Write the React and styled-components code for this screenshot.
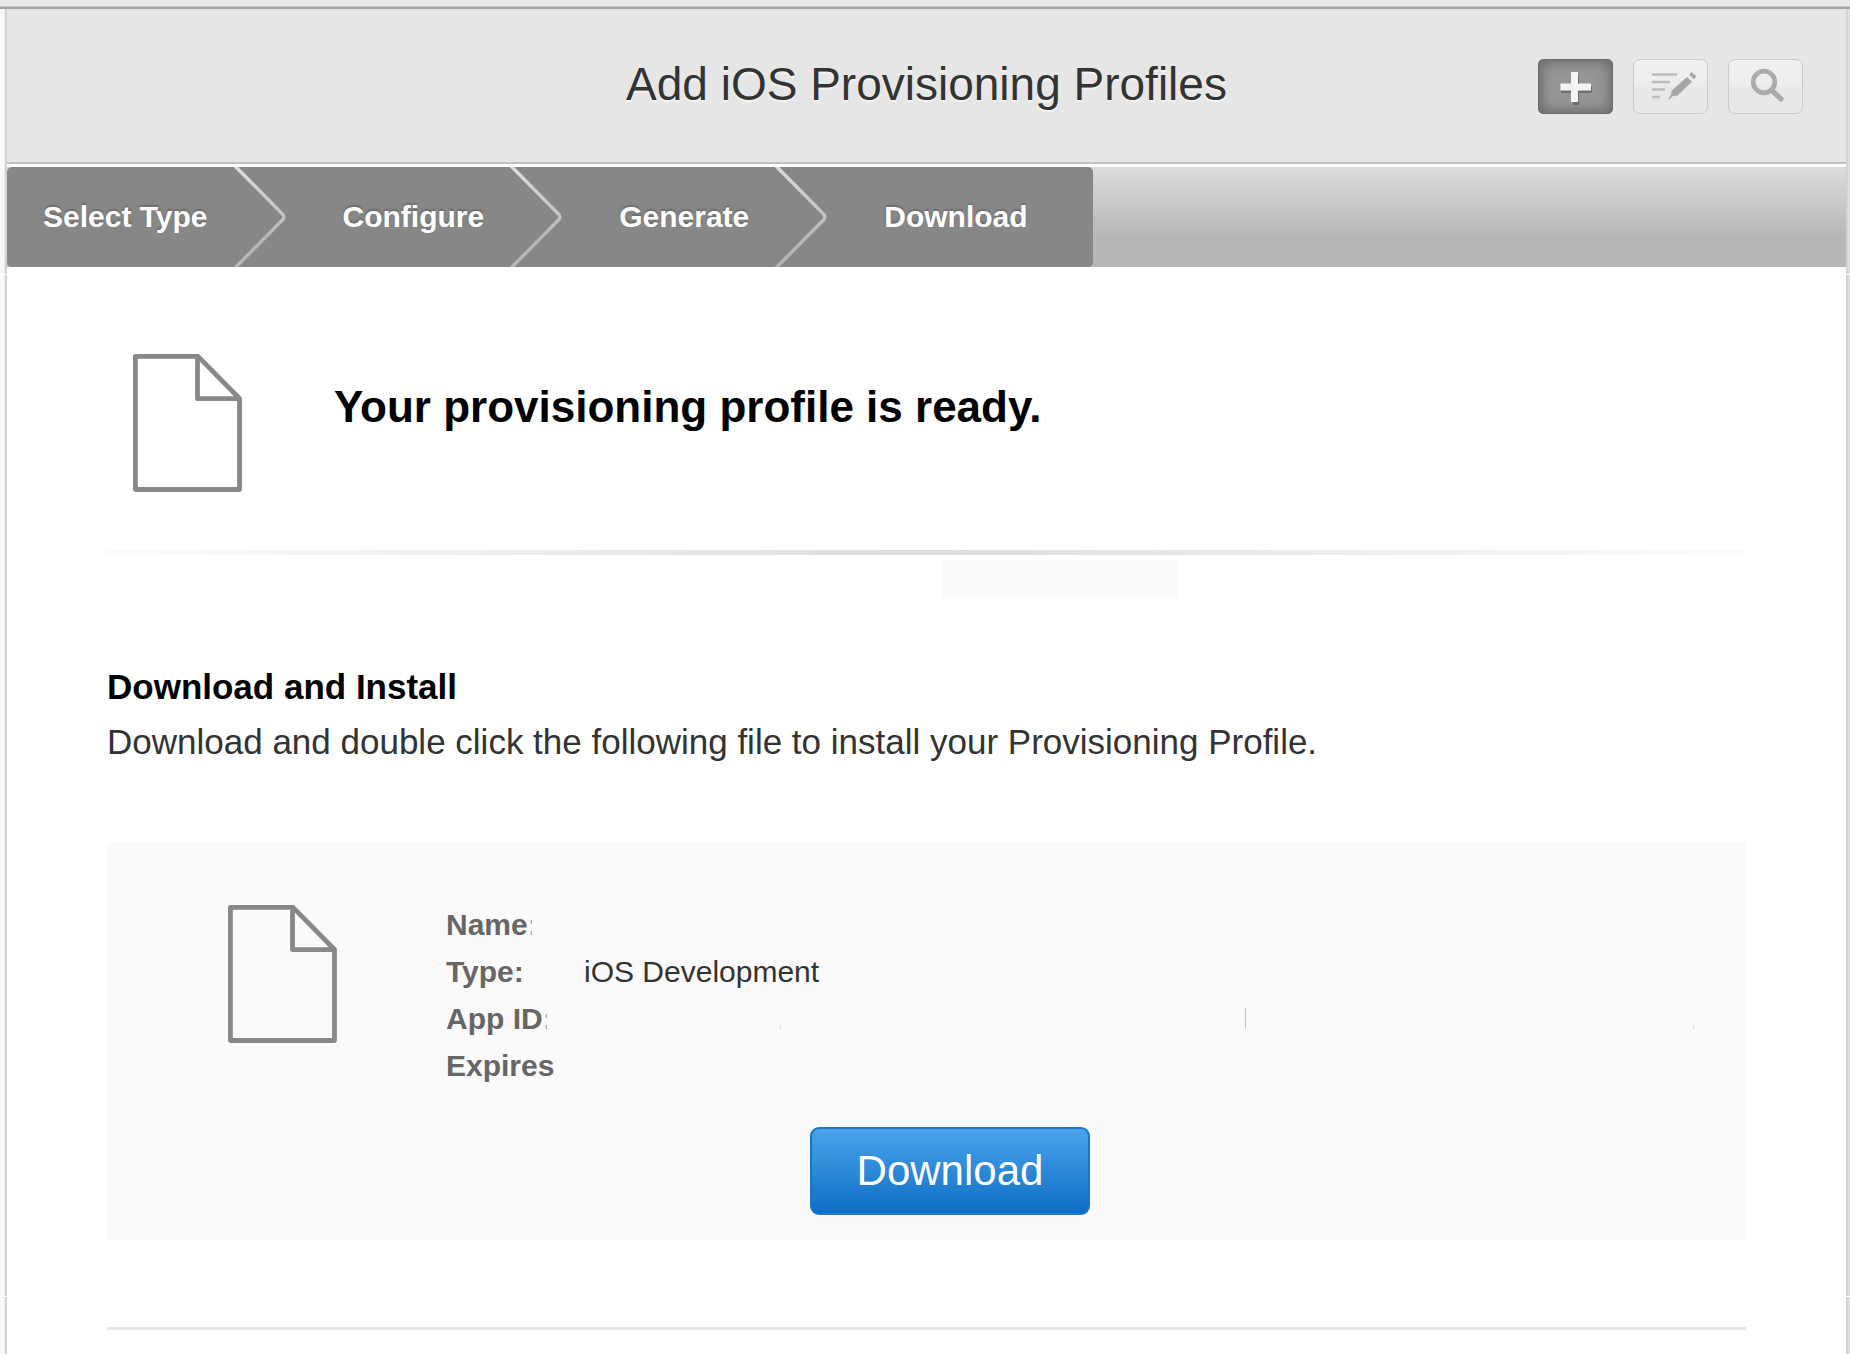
import React from "react";
import styled, { createGlobalStyle, css } from "styled-components";

const GlobalStyle = createGlobalStyle`
  *, *::before, *::after { box-sizing: border-box; }
  body {
    margin: 0;
    background: #ffffff;
    color: #333333;
    font-family: "Liberation Sans", Arial, Helvetica, sans-serif;
  }
  h1, h2, h3, p, ol, dl, dd, dt { margin: 0; padding: 0; }
`;

const Page = styled.div`
  min-height: 100vh;
  display: flex;
  flex-direction: column;
`;

const TopStrip = styled.div`
  height: 9px;
  background: #e8e8e8;
  border-bottom: 2px solid #a5a5a5;
  box-shadow: inset 0 -1px 0 #c6c6c6;
`;

const Shell = styled.div`
  flex: 1;
  display: grid;
  grid-template-columns: 7px minmax(0, 1fr) 4px;
`;

const seams = "linear-gradient(transparent 265px, #fff 265px, #fff 266px, transparent 266px, transparent 1287px, #fff 1287px, #fff 1288px, transparent 1288px)";

const LeftRail = styled.div`
  background: ${seams}, linear-gradient(90deg, #f9f9f9 4px, #ececec 4px, #ececec 5px, #d3d3d3 5px);
`;

const RightRail = styled.div`
  background: ${seams}, linear-gradient(90deg, #cccccc, #e6e6e6);
`;

const Header = styled.header`
  display: grid;
  grid-template-columns: 1fr auto 1fr;
  align-items: start;
  padding: 50px 43px 48px;
  background: #e6e6e6;
  border-bottom: 2px solid #c0c0c0;
`;

const Title = styled.h1`
  grid-column: 2;
  font-size: 46px;
  line-height: 50px;
  height: 55px;
  font-weight: 400;
  color: #333333;
  text-shadow: 0 2px 1px #f4f4f4;
`;

const Tools = styled.div`
  justify-self: end;
  display: flex;
  gap: 20px;
`;

const ToolButton = styled.button`
  width: 75px;
  height: 55px;
  padding: 0;
  border: 1px solid #cacaca;
  border-radius: 7px;
  background: linear-gradient(#f0f0f0, #ececec 50%, #e8e8e8 50%, #e9e9e9);
  cursor: pointer;

  svg { display: block; width: 73px; height: 53px; }

  ${(p) => p.$active && css`
    border-color: #6b6b6b;
    border-radius: 5px;
    background: #969696;
    box-shadow: inset 0 0 13px 2px #666666;
  `}
`;

const StepBar = styled.nav`
  margin-top: 3px;
  height: 100px;
  background: linear-gradient(#dcdcdc, #b7b7b7 70%, #b7b7b7);
`;

const Steps = styled.ol`
  display: flex;
  width: max-content;
  height: 100%;
  padding: 0 65px 0 36px;
  list-style: none;
  background: #878787;
  border-radius: 5px;
`;

const Step = styled.li`
  display: flex;
  align-items: center;
`;

const StepLabel = styled.a`
  font-size: 30px;
  line-height: 40px;
  font-weight: 700;
  color: #ffffff;
  text-decoration: none;
  text-shadow: 0 -2px 2px #6c6c6c;
`;

const Chevron = styled.svg`
  width: 52px;
  height: 100px;
  margin: 0 57px 0 26px;
`;

const Content = styled.main`
  padding: 87px 100px 24px;
`;

const Intro = styled.section`
  display: flex;
  align-items: flex-start;
  gap: 92px;
  padding: 0 26px 58px;
`;

const Ready = styled.h2`
  padding-top: 27px;
  font-size: 44px;
  line-height: 52px;
  font-weight: 700;
  color: #000000;
`;

const FadeRule = styled.div`
  height: 5px;
  background: linear-gradient(90deg, #fbfbfb, #f1f1f1 20%, #dcdcdc 50%, #f1f1f1 80%, #fbfbfb);
`;

const Patch = styled.div`
  width: 235px;
  height: 39px;
  margin: 5px 0 60px 51%;
  background: #fafafa;
`;

const SectionTitle = styled.h3`
  font-size: 35px;
  line-height: 55px;
  font-weight: 700;
  color: #000000;
`;

const Lead = styled.p`
  font-size: 35px;
  line-height: 55px;
`;

const Card = styled.section`
  margin-top: 73px;
  padding: 59px 48px 25px 121px;
  background: #fafafa;
`;

const CardBody = styled.div`
  display: flex;
  align-items: flex-start;
  gap: 109px;
`;

const FileIcon = styled.svg`
  flex: none;
  width: 109px;
  height: 138px;
  margin-top: ${(p) => (p.$inset ? 4 : 0)}px;
`;

const Details = styled.dl`
  flex: 1;
`;

const Detail = styled.div`
  display: grid;
  grid-template-columns: 138px 1fr;
  font-size: 30px;
  line-height: 47px;
`;

const Term = styled.dt`
  white-space: nowrap;
  font-weight: 700;
  color: #666666;
`;

/* Only the leading edge of the colon is painted. */
const FadedColon = styled.span`
  color: transparent;
  background: linear-gradient(90deg, #b0b0b0 4px, transparent 4px);
  background-clip: text;
  -webkit-background-clip: text;
`;

const Value = styled.dd`
  min-height: 47px;
`;

const MaskedValue = styled.dd`
  display: grid;
  grid-template-columns: 197px 465px 448px;
  align-items: end;
  padding-bottom: 13px;
`;

const Sliver = styled.span`
  width: 1px;
  height: ${(p) => p.$h}px;
  background: ${(p) => (p.$h > 10 ? "#c4c4c4" : "#dcdcdc")};
  justify-self: end;
`;

const Actions = styled.div`
  display: flex;
  justify-content: center;
  margin: 38px 0 0 -26px;
`;

const DownloadButton = styled.button`
  width: 280px;
  height: 88px;
  padding: 0;
  border: 2px solid #1b76c9;
  border-radius: 9px;
  background: linear-gradient(#4ba3eb, #0e6ec6);
  font-family: inherit;
  font-size: 42px;
  line-height: 48px;
  color: #ffffff;
  cursor: pointer;
`;

const BottomRule = styled.hr`
  height: 3px;
  margin: 87px 0 0;
  border: 0;
  background: #e6e6e6;
`;

function Document({ inset }) {
  return (
    <FileIcon $inset={inset} viewBox="0 0 109 138" fill="none" stroke="#888888" strokeWidth="4.8" strokeLinejoin="round" aria-hidden="true">
      <path d="M2.4 2.4H65L106.500 44.500V135.500H2.400Z" />
      <path d="M64.500 3V44.700H106" />
    </FileIcon>
  );
}

function StepChevron() {
  return (
    <Chevron viewBox="0 0 52 100" fill="none" aria-hidden="true">
      <defs>
        <linearGradient id="chevron" x1="0" y1="0" x2="0" y2="100" gradientUnits="userSpaceOnUse">
          <stop offset="0" stopColor="#dcdcdc" />
          <stop offset="0.7" stopColor="#b7b7b7" />
          <stop offset="1" stopColor="#b7b7b7" />
        </linearGradient>
      </defs>
      <path d="M0 -2L49 47.500Q50.500 50 49 52.500L0 102" stroke="url(#chevron)" strokeWidth="3.4" />
    </Chevron>
  );
}

const steps = ["Select Type", "Configure", "Generate", "Download"];

export default function App() {
  return (
    <Page>
      <GlobalStyle />
      <TopStrip />
      <Shell>
        <LeftRail />
        <div>
          <Header>
            <Title>Add iOS Provisioning Profiles</Title>
            <Tools>
              <ToolButton $active aria-label="Add">
                <svg viewBox="0 0 73 53" aria-hidden="true">
                  <path d="M34 15h6v12h13v6H40v12h-6V33H22v-6h12z" fill="#5f5f5f" opacity="0.7" />
                  <path d="M32 12h7v11.500h13v7H39V42h-7V30.500H21.500v-7H32z" fill="#f4f4f4" />
                </svg>
              </ToolButton>
              <ToolButton aria-label="Edit">
                <svg viewBox="0 0 73 53" aria-hidden="true">
                  <path d="M18 14.500h25M18 22h18M18 29.500h13M18 37h8" stroke="#bdbdbd" strokeWidth="2.400" />
                  <path d="M53 17l5 4.800L43.500 35.500l-5 .8L35.500 39.500l-1-1 2.500-3.500 .800-4.500z" fill="#a6a6a6" />
                  <path d="M55 14.800l2.500-2.800 4.700 4.300-2 3z" fill="#a8a8a8" />
                </svg>
              </ToolButton>
              <ToolButton aria-label="Search">
                <svg viewBox="0 0 73 53" fill="none" stroke="#ababab" aria-hidden="true">
                  <circle cx="35" cy="22" r="10.800" strokeWidth="4.800" />
                  <path d="M42.500 30l9.500 9" strokeWidth="5.200" strokeLinecap="round" />
                </svg>
              </ToolButton>
            </Tools>
          </Header>
          <StepBar aria-label="Progress">
            <Steps>
              {steps.map((name, i) => (
                <Step key={name}>
                  <StepLabel href="#">{name}</StepLabel>
                  {i < steps.length - 1 && <StepChevron />}
                </Step>
              ))}
            </Steps>
          </StepBar>
          <Content>
            <Intro>
              <Document />
              <Ready>Your provisioning profile is ready.</Ready>
            </Intro>
            <FadeRule />
            <Patch />
            <SectionTitle>Download and Install</SectionTitle>
            <Lead>Download and double click the following file to install your Provisioning Profile.</Lead>
            <Card>
              <CardBody>
                <Document inset />
                <Details>
                  <Detail>
                    <Term>Name<FadedColon>:</FadedColon></Term>
                    <Value />
                  </Detail>
                  <Detail>
                    <Term>Type:</Term>
                    <Value>iOS Development</Value>
                  </Detail>
                  <Detail>
                    <Term>App ID<FadedColon>:</FadedColon></Term>
                    <MaskedValue>
                      <Sliver $h={4} />
                      <Sliver $h={21} />
                      <Sliver $h={4} />
                    </MaskedValue>
                  </Detail>
                  <Detail>
                    <Term>Expires</Term>
                    <Value />
                  </Detail>
                </Details>
              </CardBody>
              <Actions>
                <DownloadButton type="button">Download</DownloadButton>
              </Actions>
            </Card>
            <BottomRule />
          </Content>
        </div>
        <RightRail />
      </Shell>
    </Page>
  );
}
